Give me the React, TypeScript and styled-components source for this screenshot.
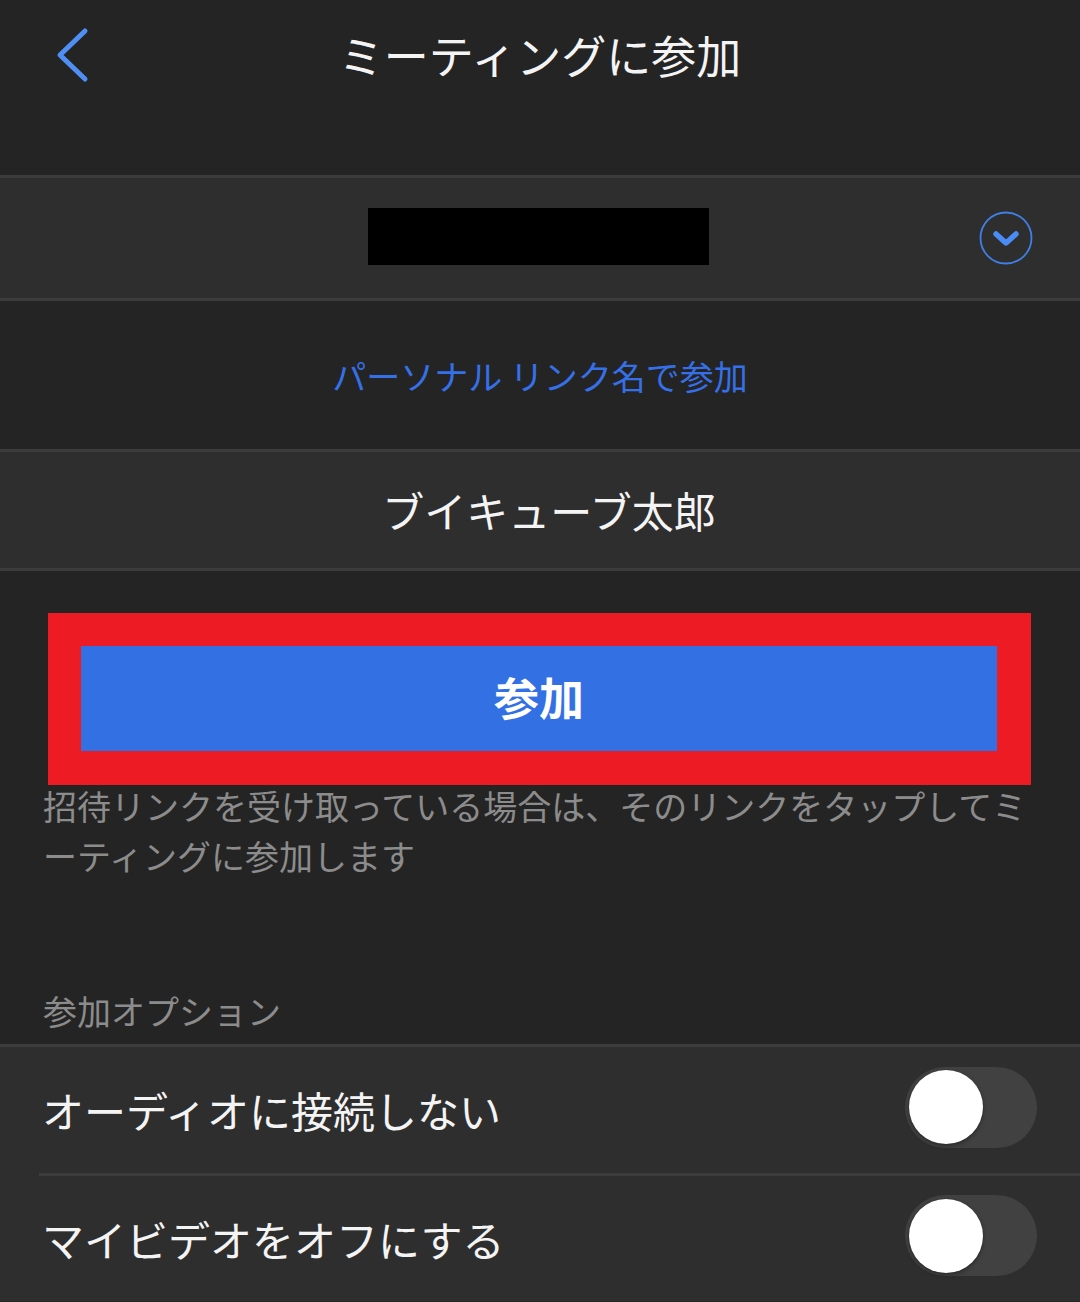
import React from "react";
import styled, { createGlobalStyle } from "styled-components";

const GlobalStyle = createGlobalStyle`
  html, body {
    margin: 0;
    padding: 0;
    background: #242424;
  }
  body {
    font-family: "Noto Sans CJK JP", "Noto Sans", sans-serif;
    -webkit-font-smoothing: antialiased;
  }
  * { box-sizing: border-box; }
`;

const Page = styled.div`
  width: 1080px;
  min-height: 1302px;
  background: #242424;
  display: flex;
  flex-direction: column;
  overflow: hidden;
`;

const NavBar = styled.header`
  height: 115px;
  display: grid;
  grid-template-columns: 1fr auto 1fr;
  align-items: center;
`;

const BackButton = styled.button`
  justify-self: start;
  margin-left: 50px;
  margin-top: -6px;
  padding: 0;
  border: none;
  background: transparent;
  display: flex;
  cursor: pointer;
`;

const Title = styled.h1`
  margin: -6px 0 0;
  font-size: 45px;
  font-weight: 400;
  line-height: 1;
  color: #f4f4f4;
  letter-spacing: 0;
`;

const NavSpacer = styled.div`
  height: 60px;
`;

const Section = styled.section<{ $height: number; $filled?: boolean }>`
  height: ${(p) => p.$height}px;
  background: ${(p) => (p.$filled ? "#2e2e2e" : "#242424")};
  border-top: 3px solid #3c3c3c;
  display: grid;
  grid-template-columns: 1fr auto 1fr;
  align-items: center;
`;

const LastBorder = styled.div`
  height: 3px;
  background: #3c3c3c;
`;

const MaskedId = styled.div`
  grid-column: 2;
  width: 341px;
  height: 57px;
  margin: -4px 3px 0 0;
  background: #000;
`;

const DropIcon = styled.button`
  grid-column: 3;
  justify-self: end;
  margin-right: 47px;
  padding: 0;
  border: none;
  background: transparent;
  display: flex;
`;

const LinkText = styled.a`
  grid-column: 2;
  font-size: 34px;
  line-height: 1;
  color: #3570e8;
  text-decoration: none;
  margin-top: 2px;
`;

const NameText = styled.div`
  grid-column: 2;
  font-size: 42px;
  line-height: 1;
  color: #f4f4f4;
  margin: 0 0 0 18px;
`;

const Highlight = styled.div`
  margin: 42px 49px 0 48px;
  background: #ed1c24;
  padding: 33px 34px 34px 33px;
`;

const JoinButton = styled.button`
  width: 100%;
  height: 105px;
  border: none;
  background: #3370e3;
  color: #ffffff;
  font-family: "Noto Sans CJK JP", sans-serif;
  font-size: 45px;
  font-weight: 700;
  display: flex;
  align-items: center;
  justify-content: center;
  padding: 0 0 4px;
`;

const Hint = styled.p`
  margin: -4px 43px 0 43px;
  font-size: 34px;
  line-height: 50px;
  color: #8c8c8c;
`;

const OptionsHeader = styled.h2`
  margin: 105px 0 0 43px;
  font-size: 34px;
  font-weight: 400;
  line-height: 50px;
  color: #8c8c8c;
  padding-bottom: 8px;
`;

const OptionsGroup = styled.div`
  background: #2e2e2e;
  border-top: 3px solid #3c3c3c;
`;

const OptionRow = styled.div<{ $first?: boolean }>`
  margin-left: 39px;
  padding: 0 43px 0 3px;
  height: ${(p) => (p.$first ? 126 : 128)}px;
  border-top: ${(p) => (p.$first ? "none" : "3px solid #3c3c3c")};
  display: flex;
  align-items: center;
  justify-content: space-between;
`;

const OptionLabel = styled.span`
  font-size: 42px;
  line-height: 1;
  color: #f4f4f4;
`;

const Track = styled.div`
  width: 132px;
  height: 81px;
  border-radius: 41px;
  background: #414141;
  padding: 4px;
  margin-bottom: 6px;
  display: flex;
  align-items: center;
`;

const Knob = styled.div`
  width: 74px;
  height: 74px;
  border-radius: 50%;
  background: #ffffff;
  box-shadow: 0 2px 4px rgba(0, 0, 0, 0.35), 0 0 1px rgba(0, 0, 0, 0.3);
`;

const Toggle = () => (
  <Track>
    <Knob />
  </Track>
);

const BackIcon = () => (
  <svg width="40" height="60" viewBox="0 0 40 60">
    <path
      d="M35 6 L10 30 L35 54"
      fill="none"
      stroke="#4f8ef2"
      strokeWidth="5"
      strokeLinecap="round"
      strokeLinejoin="round"
    />
  </svg>
);

const ChevronCircle = () => (
  <svg width="54" height="54" viewBox="0 0 54 54">
    <circle cx="27" cy="27" r="25.5" fill="none" stroke="#3f7fe6" strokeWidth="1.8" />
    <path
      d="M17 23 L27 32 L37 23"
      fill="none"
      stroke="#4a8cf5"
      strokeWidth="5.5"
      strokeLinecap="round"
      strokeLinejoin="round"
    />
  </svg>
);

export default function App() {
  return (
    <>
      <GlobalStyle />
      <Page>
        <NavBar>
          <BackButton aria-label="戻る">
            <BackIcon />
          </BackButton>
          <Title>ミーティングに参加</Title>
        </NavBar>
        <NavSpacer />
        <Section $height={123} $filled>
          <MaskedId />
          <DropIcon aria-label="履歴">
            <ChevronCircle />
          </DropIcon>
        </Section>
        <Section $height={151}>
          <LinkText href="#">パーソナル リンク名で参加</LinkText>
        </Section>
        <Section $height={119} $filled>
          <NameText>ブイキューブ太郎</NameText>
        </Section>
        <LastBorder />
        <Highlight>
          <JoinButton>参加</JoinButton>
        </Highlight>
        <Hint>
          招待リンクを受け取っている場合は、そのリンクをタップしてミ
          <br />
          ーティングに参加します
        </Hint>
        <OptionsHeader>参加オプション</OptionsHeader>
        <OptionsGroup>
          <OptionRow $first>
            <OptionLabel>オーディオに接続しない</OptionLabel>
            <Toggle />
          </OptionRow>
          <OptionRow>
            <OptionLabel>マイビデオをオフにする</OptionLabel>
            <Toggle />
          </OptionRow>
        </OptionsGroup>
      </Page>
    </>
  );
}
